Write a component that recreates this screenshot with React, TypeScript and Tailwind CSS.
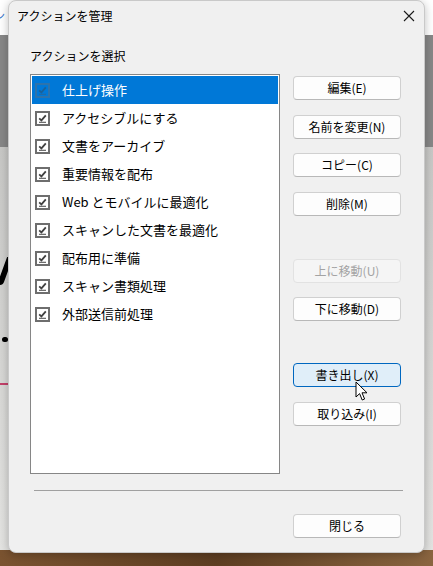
import React from "react";

const actions = [
  "仕上げ操作",
  "アクセシブルにする",
  "文書をアーカイブ",
  "重要情報を配布",
  "Web とモバイルに最適化",
  "スキャンした文書を最適化",
  "配布用に準備",
  "スキャン書類処理",
  "外部送信前処理",
];

type Btn = { label: string; mt: string; state?: "disabled" | "hover" };

const buttons: Btn[] = [
  { label: "編集(E)", mt: "mt-[2px]" },
  { label: "名前を変更(N)", mt: "mt-[15px]" },
  { label: "コピー(C)", mt: "mt-[14px]" },
  { label: "削除(M)", mt: "mt-[15px]" },
  { label: "上に移動(U)", mt: "mt-[43px]", state: "disabled" },
  { label: "下に移動(D)", mt: "mt-[14px]" },
  { label: "書き出し(X)", mt: "mt-[42px]", state: "hover" },
  { label: "取り込み(I)", mt: "mt-[15px]" },
];

// Checked list-item box, Win32 style
const CheckBox = ({ faded }: { faded?: boolean }) => (
  <svg width="15" height="15" viewBox="0 0 15 15" className={faded ? "opacity-40" : ""}>
    <rect x="1" y="1" width="13" height="13" fill={faded ? "none" : "#fff"} stroke="#6e6e6e" strokeWidth="2" />
    <path d="M4.2 7.4 L6.4 9.4 L10.8 4.4" fill="none" stroke="#404040" strokeWidth="1.8" />
    <path d="M4 11.3 H11" stroke="#555" strokeWidth="1.1" />
  </svg>
);

const DialogButton = ({ label, mt, state }: Btn) => {
  const base = "h-[24px] w-[108px] rounded-[4px] border text-[12px] flex items-center justify-center";
  let look = "bg-[#fdfdfd] border-[#d0d0d0] border-b-[#b8b8b8] text-black";
  if (state === "disabled") look = "bg-[#f5f5f5] border-[#e2e2e2] text-[#a3a3a3]";
  if (state === "hover") look = "bg-[#e0eef9] border-[#0067c0] text-black";
  return <div className={`${mt} ${base} ${look}`}>{label}</div>;
};

const Cursor = () => (
  <svg width="14" height="21" viewBox="0 0 14 21" className="absolute left-[355px] top-[381px]">
    <path
      d="M1 1 L1 16 L4.6 12.6 L7.2 19 L9.6 18 L7 11.8 L12 11.8 Z"
      fill="#fff"
      stroke="#000"
      strokeWidth="1"
      strokeLinejoin="round"
    />
  </svg>
);

export default function App() {
  return (
    <div
      className="relative w-[433px] h-[566px] overflow-hidden"
      style={{ fontFamily: '"Noto Sans CJK JP", "Noto Sans", sans-serif' }}
    >
      {/* desktop behind the dialog */}
      <div className="flex flex-col h-full">
        <div className="h-[35px] bg-white text-[11px] text-[#2a6fc9] leading-[30px]">
          <span className="-ml-[6px]">ン</span>
        </div>
        <div className="h-[112px] bg-[#878787]" />
        <div className="flex-1 bg-gradient-to-b from-[#c8c8c6] to-[#e4e4e2] relative">
          <div className="absolute left-[2px] top-[110px] w-[6px] h-[28px] bg-black rounded-b-full skew-x-[-20deg]" />
          <div className="absolute left-[2px] top-[190px] w-[6px] h-[5px] bg-black rounded-full" />
          <div className="absolute left-0 top-[236px] w-[8px] h-[2px] bg-[#c4416a]" />
        </div>
        <div className="h-[16px] bg-gradient-to-r from-[#7a5330] via-[#5e3e22] to-[#8a6540]" />
      </div>

      {/* dialog */}
      <div className="absolute left-[8px] top-0 w-[417px] h-[553px] rounded-[8px] bg-[#f0f0f0] border border-[#c9c9c9] shadow-[0_2px_10px_rgba(0,0,0,0.25)] flex flex-col">
        <div className="h-[29px] flex items-center justify-between pl-[8px] pr-[9px]">
          <span className="text-[12px] text-black">アクションを管理</span>
          <svg width="12" height="12" viewBox="0 0 12 12">
            <path d="M1 1 L11 11 M11 1 L1 11" stroke="#1a1a1a" strokeWidth="1.1" />
          </svg>
        </div>

        <div className="pl-[21px] pr-[23px]">
          <div className="mt-[18px] text-[12px] leading-[16px] text-black">アクションを選択</div>

          <div className="mt-[10px] flex gap-[13px]">
            <div className="w-[250px] h-[400px] border border-[#868686] bg-white p-[1px]">
              {actions.map((a, i) => (
                <div
                  key={a}
                  className={`h-[28px] flex items-center pl-[3px] gap-[12px] text-[13px] ${
                    i === 0 ? "bg-[#0078d7] text-white" : "text-black"
                  }`}
                >
                  <CheckBox faded={i === 0} />
                  <span>{a}</span>
                </div>
              ))}
            </div>

            <div className="flex flex-col">
              {buttons.map((b) => (
                <DialogButton key={b.label} {...b} />
              ))}
            </div>
          </div>

          <div className="mt-[16px] ml-[4px] mr-[-2px] h-px bg-[#a0a0a0]" />

          <div className="mt-[23px] flex justify-end">
            <DialogButton label="閉じる" mt="mt-0" />
          </div>
        </div>
      </div>

      <Cursor />
    </div>
  );
}
